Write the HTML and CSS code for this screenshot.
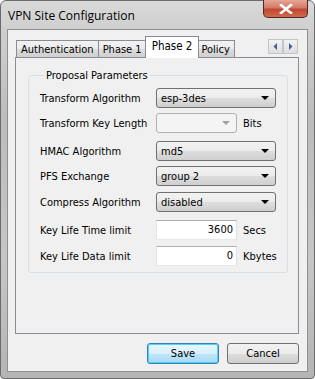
FILE: index.html
```html
<!DOCTYPE html>
<html>
<head>
    <title>VPN Site Configuration</title>
    <link rel="stylesheet" href="styles.css">
</head>
<body>
    <div class="window">
        <div class="titlebar">
            <span class="title">VPN Site Configuration</span>
            <div class="close-btn">
                <svg width="14" height="10" viewBox="0 0 14 10">
                    <path d="M2 1 L12 9 M12 1 L2 9" stroke="#fff" stroke-width="2.6" stroke-linecap="square"/>
                </svg>
            </div>
        </div>

        <div class="client">
            <div class="tabs">
                <div class="tab-strip">
                    <div class="tab">Authentication</div>
                    <div class="tab">Phase 1</div>
                    <div class="tab active">Phase 2</div>
                    <div class="tab">Policy</div>
                    <div class="tab-scroll">
                        <div class="scroll-btn">
                            <svg width="5" height="7" viewBox="0 0 5 7"><path d="M4 0 L4 7 L0.5 3.5 Z" fill="#3a5f9a"/></svg>
                        </div>
                        <div class="scroll-btn">
                            <svg width="5" height="7" viewBox="0 0 5 7"><path d="M1 0 L1 7 L4.5 3.5 Z" fill="#3a5f9a"/></svg>
                        </div>
                    </div>
                </div>

                <div class="tab-panel">
                    <fieldset class="group">
                        <legend>Proposal Parameters</legend>

                        <div class="row r1">
                            <label>Transform Algorithm</label>
                            <div class="combo"><span>esp-3des</span><i class="arrow"></i></div>
                        </div>
                        <div class="row r2">
                            <label>Transform Key Length</label>
                            <div class="combo short disabled"><span></span><i class="arrow"></i></div>
                            <span class="unit">Bits</span>
                        </div>
                        <div class="row r3">
                            <label>HMAC Algorithm</label>
                            <div class="combo"><span>md5</span><i class="arrow"></i></div>
                        </div>
                        <div class="row r4">
                            <label>PFS Exchange</label>
                            <div class="combo"><span>group 2</span><i class="arrow"></i></div>
                        </div>
                        <div class="row r5">
                            <label>Compress Algorithm</label>
                            <div class="combo"><span>disabled</span><i class="arrow"></i></div>
                        </div>
                        <div class="row r6">
                            <label>Key Life Time limit</label>
                            <div class="textbox">3600</div>
                            <span class="unit">Secs</span>
                        </div>
                        <div class="row r7">
                            <label>Key Life Data limit</label>
                            <div class="textbox">0</div>
                            <span class="unit">Kbytes</span>
                        </div>
                    </fieldset>
                </div>
            </div>

            <div class="buttons">
                <button class="btn default">Save</button>
                <button class="btn">Cancel</button>
            </div>
        </div>
    </div>
</body>
</html>
```

FILE: styles.css
```css
body {
    margin: 0;
    background-color: #ffffff;
    font-family: "DejaVu Sans Condensed", "Liberation Sans", Arial, sans-serif;
    font-size: 11px;
    color: #000;
}
.window {
    width: 315px;
    height: 379px;
    box-sizing: border-box;
    border: 1px solid #6b6b6b;
    border-radius: 6px 6px 4px 4px;
    background: linear-gradient(to bottom, #d9d9d9 0px, #cfcfcf 30px, #bcbcbc 120px, #c6c6c6 260px, #b4b4b4 379px);
    display: flex;
    flex-direction: column;
}
.titlebar {
    height: 28px;
    display: flex;
    align-items: flex-start;
    justify-content: space-between;
}
.title {
    font-family: "Open Sans", "Liberation Sans", sans-serif;
    font-size: 12px;
    margin: 6px 0 0 7px;
    color: #000;
}
.close-btn {
    width: 45px;
    height: 18px;
    margin-right: 6px;
    margin-top: -1px;
    box-sizing: border-box;
    border: 1px solid #4f2a25;
    border-top: none;
    border-radius: 0 0 5px 5px;
    background: linear-gradient(to bottom, #e8a596 0%, #d47b68 45%, #c24530 55%, #cf6a4c 100%);
    display: flex;
    align-items: center;
    justify-content: center;
}
.client {
    margin: 0 6px 0 6px;
    height: 343px;
    box-sizing: border-box;
    border: 1px solid #8e8f8f;
    background-color: #f0f0f0;
    padding: 6px 8px 0 7px;
}
.tabs {
    display: flex;
    flex-direction: column;
}
.tab-strip {
    display: flex;
    align-items: flex-end;
    height: 21px;
    position: relative;
    padding-left: 1px;
}
.tab {
    height: 17px;
    line-height: 17px;
    padding: 0 4px;
    box-sizing: border-box;
    border: 1px solid #898c95;
    border-bottom: none;
    margin-left: -1px;
    background: linear-gradient(to bottom, #f2f2f2 0%, #ebebeb 50%, #dddddd 51%, #cfcfcf 100%);
    white-space: nowrap;
}
.tab:first-child {
    margin-left: 0;
}
.tab.active {
    line-height: 18px;
    padding: 0 6px;
    margin: 0 -2px -1px -2px;
    height: 22px;
    background: #ffffff;
    position: relative;
    z-index: 2;
    font-size: 11.5px;
}
.tab-scroll {
    position: absolute;
    right: 1px;
    top: 3px;
    display: flex;
}
.scroll-btn {
    width: 15px;
    height: 15px;
    box-sizing: border-box;
    border: 1px solid #c2c5ca;
    background: linear-gradient(to bottom, #f2f2f2, #dedede);
    display: flex;
    align-items: center;
    justify-content: center;
}
.tab-panel {
    height: 277px;
    box-sizing: border-box;
    border: 1px solid #898c95;
    background: #f0f0f0;
    padding: 11px 10px 0 12px;
}
.group {
    margin: 0;
    height: 204px;
    box-sizing: border-box;
    border: 1px solid #d5dfe5;
    border-radius: 3px;
    padding: 6px 0 0 11px;
}
.group legend {
    padding: 0 2px;
    margin-left: 4px;
}
.row {
    display: flex;
    align-items: center;
    height: 20px;
    margin-bottom: 6px;
}
.row.r1 { margin-bottom: 5px; }
.row.r2 { margin-bottom: 8px; }
.row.r3 { margin-bottom: 5px; }
.row.r5 { margin-bottom: 8px; }
.row label {
    width: 116px;
    white-space: nowrap;
}
.combo {
    width: 120px;
    height: 20px;
    box-sizing: border-box;
    border: 1px solid #707070;
    border-radius: 3px;
    background: linear-gradient(to bottom, #f2f2f2 0%, #ebebeb 50%, #dddddd 51%, #cfcfcf 100%);
    display: flex;
    align-items: center;
    justify-content: space-between;
    padding: 0 6px 0 4px;
}
.combo.short {
    width: 81px;
}
.combo.disabled {
    border-color: #adb2b5;
    background: #f4f4f4;
}
.arrow {
    width: 0;
    height: 0;
    border-left: 4px solid transparent;
    border-right: 4px solid transparent;
    border-top: 4px solid #000;
}
.combo.disabled .arrow {
    border-top-color: #a0a0a0;
}
.textbox {
    width: 81px;
    height: 20px;
    box-sizing: border-box;
    border: 1px solid #abadb3;
    border-left-color: #e2e3ea;
    border-right-color: #dbdfe6;
    border-bottom-color: #e3e9ef;
    background: #fff;
    text-align: right;
    line-height: 18px;
    padding-right: 3px;
}
.unit {
    margin-left: 6px;
}
.buttons {
    display: flex;
    justify-content: flex-end;
    gap: 8px;
    margin-top: 9px;
}
.btn {
    width: 72px;
    height: 21px;
    box-sizing: border-box;
    border: 1px solid #707070;
    border-radius: 3px;
    background: linear-gradient(to bottom, #f2f2f2 0%, #ebebeb 50%, #dddddd 51%, #cfcfcf 100%);
    font-family: "DejaVu Sans Condensed", "Liberation Sans", Arial, sans-serif;
    font-size: 11px;
    padding: 0;
    color: #000;
}
.btn.default {
    border-color: #3c7fb1;
    background: linear-gradient(to bottom, #eaf6fd 0%, #d9f0fc 50%, #bee6fd 51%, #a7d9f5 100%);
    box-shadow: inset 0 0 0 1px #48d3fb;
}
```
